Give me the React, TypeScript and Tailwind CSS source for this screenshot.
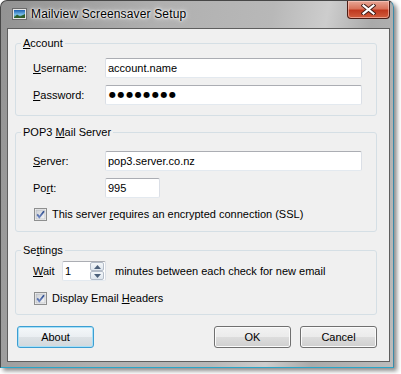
import type { ReactNode } from "react";

const font = "font-['Liberation_Sans',Arial,sans-serif] text-[11px] text-black";

function U({ children }: { children: ReactNode }) {
  return <span className="underline underline-offset-[1px]">{children}</span>;
}

function TextBox({ value, w = "w-[257px]" }: { value: ReactNode; w?: string }) {
  return (
    <div
      className={`${w} h-[20px] flex items-center pl-[2px] bg-white border border-[#dbdfe6] border-t-[#abadb3] border-b-[#e3e9ef] rounded-[2px]`}
    >
      {value}
    </div>
  );
}

function CheckBox() {
  return (
    <svg width="13" height="13" viewBox="0 0 13 13" className="shrink-0">
      <defs>
        <linearGradient id="cbg" x1="0" y1="0" x2="1" y2="1">
          <stop offset="0" stopColor="#cbcfd5" />
          <stop offset="1" stopColor="#f6f6f6" />
        </linearGradient>
        <linearGradient id="ck" x1="0" y1="0" x2="0" y2="1">
          <stop offset="0" stopColor="#2c4a8c" />
          <stop offset="1" stopColor="#6d86c2" />
        </linearGradient>
      </defs>
      <rect x="0.5" y="0.5" width="12" height="12" fill="#f4f4f4" stroke="#8e8f8f" />
      <rect x="2" y="2" width="9" height="9" fill="url(#cbg)" stroke="#aeb3b9" strokeWidth="0.6" />
      <path d="M3.2 6.4 L5.3 9.3 L10 3.2" fill="none" stroke="url(#ck)" strokeWidth="1.8" />
    </svg>
  );
}

function Group({ title, className, inner, children }: { title: ReactNode; className?: string; inner: string; children: ReactNode }) {
  return (
    <fieldset className={`border border-[#d5dfe5] rounded-[3px] ${className ?? ""}`}>
      <legend className="ml-[5px] px-[2px] h-[14px] leading-[14px]">{title}</legend>
      <div className={`pl-[17px] pr-[13px] ${inner}`}>{children}</div>
    </fieldset>
  );
}

function Button({ label, focused }: { label: string; focused?: boolean }) {
  return (
    <div
      className={`h-[22px] flex items-center justify-center rounded-[3px] border ${
        focused
          ? "w-[77px] border-[#3c9ed2] shadow-[inset_0_0_0_1px_#a6e0f8] bg-[linear-gradient(#f4f8fa_0%,#eaeef2_50%,#dde2e6_50%,#d2d8dc_100%)]"
          : "w-[77px] border-[#707070] shadow-[inset_0_0_0_1px_#fbfbfb] bg-[linear-gradient(#f2f2f2_0%,#ebebeb_50%,#dddddd_50%,#cfcfcf_100%)]"
      }`}
    >
      {label}
    </div>
  );
}

function Spin() {
  return (
    <div className="w-[44px] h-[20px] flex bg-white border border-[#dbdfe6] border-t-[#abadb3] border-b-[#e3e9ef] rounded-[2px]">
      <div className="flex-1 flex items-center pl-[2px]">1</div>
      <div className="w-[15px] flex flex-col pr-[1px]">
        {["up", "down"].map((d) => (
          <div
            key={d}
            className="flex-1 flex items-center justify-center border border-[#b4bcc8] rounded-[2px] bg-[linear-gradient(#f3f6f9,#dfe6ee)]"
          >
            <svg width="7" height="4" viewBox="0 0 7 4">
              <path d={d === "up" ? "M0 4 L3.5 0 L7 4 Z" : "M0 0 L3.5 4 L7 0 Z"} fill="#4c607a" />
            </svg>
          </div>
        ))}
      </div>
    </div>
  );
}

function WindowIcon() {
  return (
    <svg width="15" height="14" viewBox="0 0 15 14">
      <defs>
        <linearGradient id="sky" x1="0" y1="0" x2="0" y2="1">
          <stop offset="0" stopColor="#1a5fb0" />
          <stop offset="0.6" stopColor="#7cc0ea" />
          <stop offset="1" stopColor="#2f6a3a" />
        </linearGradient>
      </defs>
      <rect x="0.5" y="1.5" width="14" height="11" fill="#e6e6e6" stroke="#6a6a6a" />
      <rect x="2" y="3" width="11" height="8" fill="url(#sky)" />
      <path d="M2 11 L5 7.5 L8 9.5 L13 7 L13 11 Z" fill="#2e5e2a" />
    </svg>
  );
}

export default function App() {
  return (
    <div className={`w-[401px] h-[374px] bg-white ${font}`}>
      <div className="w-[394px] h-[368px] flex flex-col rounded-t-[7px] border border-[#474747] border-b-[#2aa6c8] border-r-[#3a8aa8] shadow-[3px_3px_4px_rgba(0,0,0,0.45)] bg-[linear-gradient(100deg,#929292_0%,#b0b0b0_35%,#b8b8b8_60%,#cdcdcd_72%,#aaaaaa_82%,#bcbcbc_100%)]">
        {/* Title bar */}
        <div className="h-[27px] flex items-start shrink-0">
          <div className="flex items-center h-[26px] pl-[11px] gap-[4px]">
            <WindowIcon />
            <span className="font-['Liberation_Sans',Arial,sans-serif] text-[12px] tracking-[0.15px] [text-shadow:0_0_6px_#fff,0_0_3px_#fff,0_0_2px_#fff]">
              Mailview Screensaver Setup
            </span>
          </div>
          <div className="ml-auto mr-[3px] w-[43px] h-[18px] rounded-b-[4px] border border-t-0 border-[#4b1c14] bg-[linear-gradient(#e7a796_0%,#d8735b_45%,#c0391f_55%,#d15e3e_100%)] shadow-[inset_0_0_0_1px_rgba(255,210,200,0.55)] flex items-center justify-center">
            <svg width="15" height="11" viewBox="0 0 15 11">
              <path d="M2.5 1.5 L12.5 9.5 M12.5 1.5 L2.5 9.5" stroke="#3c1a14" strokeWidth="4" strokeLinecap="square" />
              <path d="M2.5 1.5 L12.5 9.5 M12.5 1.5 L2.5 9.5" stroke="#ffffff" strokeWidth="2.2" strokeLinecap="square" />
            </svg>
          </div>
        </div>

        {/* Client area */}
        <div className="ml-[6px] mr-[3px] h-[334px] border border-[#5e5e5e] bg-[#f0f0f0] pl-[7px] pr-[12px] flex flex-col">
          <Group title={<><U>A</U>ccount</>} className="mt-[7px]" inner="pt-[8px] pb-[10px]">
            <div className="flex flex-col gap-[7px]">
              <div className="flex items-center">
                <span className="w-[72px]"><U>U</U>sername:</span>
                <TextBox value="account.name" />
              </div>
              <div className="flex items-center">
                <span className="w-[72px]"><U>P</U>assword:</span>
                <TextBox value={<span className="font-['DejaVu_Sans',sans-serif] text-[8px] tracking-[1.6px] pl-[1px]">●●●●●●●●</span>} />
              </div>
            </div>
          </Group>

          <Group title={<>POP3 <U>M</U>ail Server</>} className="mt-[9px]" inner="pt-[12px] pb-[10px]">
            <div className="flex flex-col">
              <div className="flex items-center">
                <span className="w-[72px]"><U>S</U>erver:</span>
                <TextBox value="pop3.server.co.nz" />
              </div>
              <div className="flex items-center mt-[7px]">
                <span className="w-[72px]">Po<U>r</U>t:</span>
                <TextBox value="995" w="w-[55px]" />
              </div>
              <div className="flex items-center mt-[10px] pl-[1px] gap-[5px] h-[13px]">
                <CheckBox />
                <span>This server <U>r</U>equires an encrypted connection (SSL)</span>
              </div>
            </div>
          </Group>

          <Group title={<>Se<U>t</U>tings</>} className="mt-[11px]" inner="pt-[4px] pb-[9px]">
            <div className="flex flex-col">
              <div className="flex items-center">
                <span className="w-[29px]"><U>W</U>ait</span>
                <Spin />
                <span className="ml-[9px]">minutes between each check for new email</span>
              </div>
              <div className="flex items-center mt-[11px] pl-[1px] gap-[5px] h-[13px]">
                <CheckBox />
                <span>Display Email <U>H</U>eaders</span>
              </div>
            </div>
          </Group>

          <div className="mt-[11px] flex items-center pl-[2px]">
            <Button label="About" focused />
            <div className="ml-auto flex gap-[9px]">
              <Button label="OK" />
              <Button label="Cancel" />
            </div>
          </div>
        </div>
      </div>
    </div>
  );
}
